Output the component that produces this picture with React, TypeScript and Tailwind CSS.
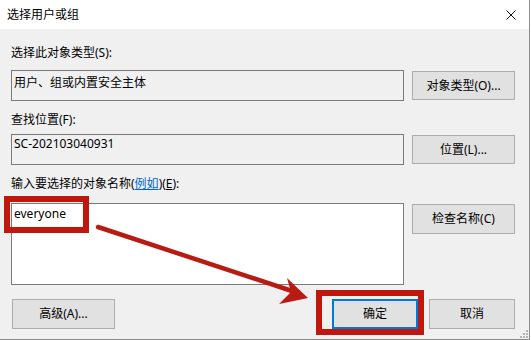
import React from 'react';

const FONT = "font-['Noto_Sans','Noto_Sans_CJK_SC',sans-serif]";

function Btn({ label, className = '' }: { label: React.ReactNode; className?: string }) {
  return (
    <div
      className={`flex items-center justify-center bg-[#e1e1e1] border border-[#adadad] text-[12px] leading-[16px] text-black ${className}`}
    >
      {label}
    </div>
  );
}

export default function App() {
  return (
    <div className={`relative w-[531px] h-[340px] bg-white overflow-hidden ${FONT}`}>
      <div className="flex flex-col w-[530px] h-[340px] bg-[#f0f0f0] border-r border-b border-[#8c8c8c]">
        {/* title bar */}
        <div className="flex items-center justify-between h-[29px] bg-white pl-[7px] pr-[13px]">
          <span className="text-[12px] leading-[16px] text-black">选择用户或组</span>
          <svg width="10" height="10" viewBox="0 0 10 10">
            <path d="M0.5 0.5 L9.5 9.5 M9.5 0.5 L0.5 9.5" stroke="#111" strokeWidth="1" />
          </svg>
        </div>

        <div className="flex flex-col pl-[11px] pr-[14px] pt-[16px] text-[12px] leading-[16px] text-black">
          <div>选择此对象类型(S):</div>
          <div className="flex items-start gap-[8px] mt-[9px]">
            <div className="w-[393px] h-[31px] border border-[#7a7a7a] bg-[#f0f0f0] pl-[2px] pt-[4px]">
              用户、组或内置安全主体
            </div>
            <Btn label="对象类型(O)..." className="w-[103px] h-[29px] mt-[1px]" />
          </div>

          <div className="mt-[11px]">查找位置(F):</div>
          <div className="flex items-start gap-[8px] mt-[6px]">
            <div className="w-[393px] h-[31px] border border-[#7a7a7a] bg-[#f0f0f0] pl-[2px] pt-[1px]">
              SC-202103040931
            </div>
            <Btn label="位置(L)..." className="w-[103px] h-[29px] mt-[1px]" />
          </div>

          <div className="mt-[11px]">
            输入要选择的对象名称(<span className="text-[#0066cc] underline">例如</span>)(<span className="underline">E</span>):
          </div>
          <div className="flex items-start gap-[8px] mt-[11px]">
            <div className="w-[393px] h-[82px] border border-[#7a7a7a] bg-white pl-[2px] pt-[2px]">
              everyone
            </div>
            <Btn label="检查名称(C)" className="w-[103px] h-[30px] mt-[1px]" />
          </div>

          <div className="flex items-center mt-[14px]">
            <Btn label="高级(A)..." className="w-[103px] h-[30px] ml-[1px]" />
            <div className="flex-1" />
            <Btn label="确定" className="w-[86px] h-[30px] !border-2 !border-[#0078d7]" />
            <Btn label="取消" className="w-[86px] h-[30px] ml-[11px]" />
          </div>
        </div>
      </div>

      {/* resize grip */}
      <svg className="absolute right-[3px] bottom-[2px]" width="9" height="9" viewBox="0 0 9 9">
        <g fill="#b4b4b4">
          <rect x="7" y="1" width="2" height="2" />
          <rect x="4" y="4" width="2" height="2" />
          <rect x="7" y="4" width="2" height="2" />
          <rect x="1" y="7" width="2" height="2" />
          <rect x="4" y="7" width="2" height="2" />
          <rect x="7" y="7" width="2" height="2" />
        </g>
      </svg>

      {/* red annotations */}
      <svg className="absolute inset-0 pointer-events-none" width="531" height="340" viewBox="0 0 531 340">
        <rect x="7" y="199" width="79" height="31" fill="none" stroke="#c1160c" strokeWidth="6" />
        <rect x="319" y="293" width="102" height="39" fill="none" stroke="#c1160c" strokeWidth="6" />
        <line x1="98" y1="227" x2="292" y2="291" stroke="#b81b12" strokeWidth="4.5" strokeLinecap="round" />
        <polygon points="308,298 287,278 291,292 279,304" fill="#b81b12" />
      </svg>
    </div>
  );
}
